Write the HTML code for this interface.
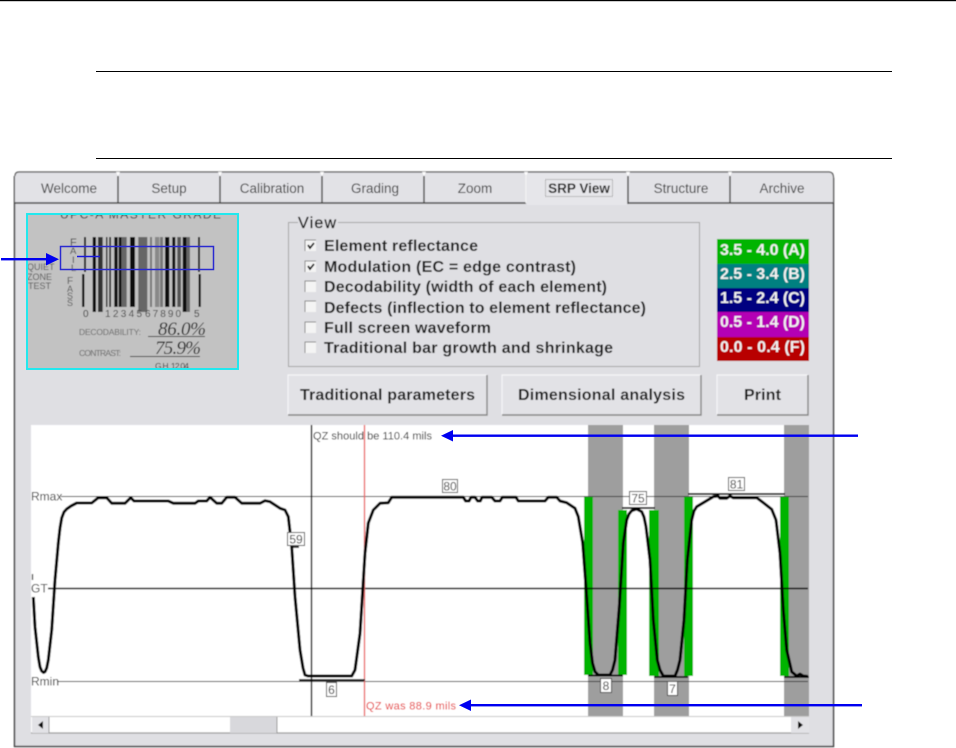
<!DOCTYPE html>
<html>
<head>
<meta charset="utf-8">
<style>
html,body{margin:0;padding:0;background:#fff;width:956px;height:748px;overflow:hidden}
svg{display:block;position:absolute;left:0;top:0}
text{font-family:"Liberation Sans",sans-serif}
.tab{font-size:13.5px;fill:#3a3a3a;text-anchor:middle}
.opt{font-size:16px;font-weight:700;fill:#1c1c1c}
.btn{font-size:16px;font-weight:700;fill:#1c1c1c}
.leg{font-size:16px;font-weight:700;fill:#f2f2f2}
.lb{font-size:12px;fill:#333;text-anchor:middle}
.ax{font-size:12px;fill:#333}
</style>
</head>
<body>
<svg width="956" height="748" viewBox="0 0 956 748" xmlns="http://www.w3.org/2000/svg">
<defs>
<filter id="b1" x="-2%" y="-2%" width="104%" height="104%"><feGaussianBlur stdDeviation="0.4"/></filter>
<filter id="b2" x="-2%" y="-2%" width="104%" height="104%"><feGaussianBlur stdDeviation="0.6"/></filter>
<clipPath id="imgclip"><rect x="27" y="214" width="211" height="155"/></clipPath>
</defs>
<rect x="0" y="0" width="956" height="1.200" fill="#000"/>
<rect x="96" y="71" width="796" height="1" fill="#000"/>
<rect x="96" y="158" width="796" height="1" fill="#000"/>

<g filter="url(#b1)">
<!-- panel -->
<rect x="15" y="203" width="818" height="543" fill="#dfdfe3"/>
<path d="M14.500 176V746.500H833.500V178" fill="none" stroke="#444" stroke-width="1.500"/>
<!-- tabs -->
<path d="M15 203V176Q15 172 19 172H828Q834 172 834 178V203Z" fill="#e2e2e6"/>
<path d="M15 176Q15 172 19 172H829Q833 172 833.500 177V203" fill="none" stroke="#5a5a5a" stroke-width="1.200"/>
<path d="M15 203H526M628 203H833" stroke="#444" stroke-width="1.500" fill="none"/>
<path d="M118 176V203M220 176V203M322 176V203M424 176V203M628 176V204M730 176V203" stroke="#444" stroke-width="1.400"/>
<rect x="527" y="173" width="100" height="32" fill="#e6e6ea"/>
<path d="M526 176V203" stroke="#f4f4f4" stroke-width="1.200"/>
<path d="M116 172h4l-2 4zM218 172h4l-2 4zM320 172h4l-2 4zM422 172h4l-2 4zM524 172h4l-2 4zM626 172h4l-2 4zM728 172h4l-2 4z" fill="#fff"/>
<text class="tab" x="69" y="193">Welcome</text>
<text class="tab" x="169" y="193">Setup</text>
<text class="tab" x="272" y="193">Calibration</text>
<text class="tab" x="375" y="193">Grading</text>
<text class="tab" x="475" y="193">Zoom</text>
<rect x="545.500" y="179.500" width="67" height="17" fill="none" stroke="#777" stroke-width="1" stroke-dasharray="1 1"/>
<text x="579" y="193" text-anchor="middle" font-size="13.500" font-weight="700" fill="#222">SRP View</text>
<text class="tab" x="681" y="193">Structure</text>
<text class="tab" x="782" y="193">Archive</text>

<!-- View group -->
<rect x="288.500" y="222.500" width="411" height="144" fill="none" stroke="#a4a4a4" stroke-width="1"/>
<rect x="298" y="216" width="40" height="12" fill="#dfdfe3"/>
<text x="298" y="228" font-size="16" fill="#111" textLength="38" lengthAdjust="spacing" stroke="#111" stroke-width=".3">View</text>
<g fill="#f4f4f4">
<rect x="305" y="240" width="11" height="11"/>
<rect x="305" y="261" width="11" height="11"/>
<rect x="305" y="281" width="11" height="11"/>
<rect x="305" y="301" width="11" height="11"/>
<rect x="305" y="322" width="11" height="11"/>
<rect x="305" y="342" width="11" height="11"/>
</g>
<path d="M316 240H305V251M316 261H305V272M316 281H305V292M316 301H305V312M316 322H305V333M316 342H305V353" fill="none" stroke="#888" stroke-width="1"/>
<path d="M308 245l2 3 4-5M308 266l2 3 4-5" fill="none" stroke="#000" stroke-width="1.800"/>
<text class="opt" x="324" y="251" textLength="154" lengthAdjust="spacing">Element reflectance</text>
<text class="opt" x="324" y="272" textLength="252" lengthAdjust="spacing">Modulation (EC = edge contrast)</text>
<text class="opt" x="324" y="292" textLength="283" lengthAdjust="spacing">Decodability (width of each element)</text>
<text class="opt" x="324" y="313" textLength="322" lengthAdjust="spacing">Defects (inflection to element reflectance)</text>
<text class="opt" x="324" y="333" textLength="167" lengthAdjust="spacing">Full screen waveform</text>
<text class="opt" x="324" y="353" textLength="289" lengthAdjust="spacing">Traditional bar growth and shrinkage</text>

<!-- legend -->
<rect x="717" y="239" width="92" height="25" fill="#00b400"/>
<rect x="717" y="264" width="92" height="24" fill="#008080"/>
<rect x="717" y="288" width="92" height="24" fill="#000080"/>
<rect x="717" y="312" width="92" height="25" fill="#b400b4"/>
<rect x="717" y="337" width="92" height="24" fill="#b80000"/>
<text class="leg" x="720" y="255" textLength="85" lengthAdjust="spacing">3.5 - 4.0 (A)</text>
<text class="leg" x="720" y="279" textLength="85" lengthAdjust="spacing">2.5 - 3.4 (B)</text>
<text class="leg" x="720" y="303" textLength="85" lengthAdjust="spacing">1.5 - 2.4 (C)</text>
<text class="leg" x="720" y="327" textLength="85" lengthAdjust="spacing">0.5 - 1.4 (D)</text>
<text class="leg" x="720" y="352" textLength="85" lengthAdjust="spacing">0.0 - 0.4 (F)</text>

<!-- buttons -->
<g fill="#e2e2e6">
<rect x="288" y="375" width="199" height="40"/>
<rect x="502" y="375" width="199" height="40"/>
<rect x="717" y="375" width="91" height="40"/>
</g>
<path d="M288 415V375H487M502 415V375H701M717 415V375H808" fill="none" stroke="#f6f6f8" stroke-width="1.200"/>
<path d="M288 415H487V375M502 415H701V375M717 415H808V375" fill="none" stroke="#858585" stroke-width="1.400"/>
<text class="btn" x="300" y="400" textLength="175" lengthAdjust="spacing">Traditional parameters</text>
<text class="btn" x="518" y="400" textLength="167" lengthAdjust="spacing">Dimensional analysis</text>
<text class="btn" x="744" y="400" textLength="37" lengthAdjust="spacing">Print</text>

<!-- plot -->
<rect x="31" y="425" width="778" height="292" fill="#fff"/>
<g fill="#9e9e9e">
<rect x="588" y="425" width="35" height="292"/>
<rect x="654" y="425" width="35" height="292"/>
<rect x="784" y="425" width="25" height="292"/>
</g>
<g fill="#00b400">
<path d="M584 497H593L593 675H584Z"/>
<path d="M618 510H627V675H618Z"/>
<path d="M649 510H659V676H649Z"/>
<path d="M684 497H693V676H684Z"/>
<path d="M780 497H789V676H780Z"/>
</g>
<g stroke="#000" fill="none">
<path d="M61 496.500H808" stroke-width="1.100" stroke="#333"/>
<path d="M48 588.500H808" stroke-width="1.400"/>
<path d="M57 681.500H808" stroke-width="1.100" stroke="#333"/>
<path d="M311.500 425V717" stroke-width="1.400"/>
<path d="M32.500 574V580" stroke-width="1.200"/>
</g>
<path d="M364.500 425V717" stroke="#ec6a6a" stroke-width="1.400"/>
<g stroke="#000" stroke-width="1.700" fill="none">
<path d="M688 494H785"/><path d="M622 508H655"/><path d="M588 675.500H623"/><path d="M654 677H688"/><path d="M299 680H365"/><path d="M291 547H299"/><path d="M391 497.500H463"/><path d="M784 677H809"/>
</g>
<path fill="none" stroke="#000" stroke-width="3" stroke-linejoin="round" d="M33.300 597L35 627L38.300 657L40 667L41.700 671L43.500 672.500L45 671.700L46.700 668L48.300 660L51.700 630L55 580L58.300 543L60 528L61.700 518L64 512L66.700 509L71 506L76.700 503L91.700 503L98.300 497.700L106.700 497.700L111.700 503.300L125 503.300L130.700 497.700L134 501L168.300 501L173.300 503.300L195 503.300L198.300 501L206.700 501L210 497.300L216.700 503.300L221.700 503.300L226.700 497.300L235 497.300L241.700 503.300L260 503.300L265 500.700L270 501.700L280 508.300L285 510L288.300 516.700L291.700 546.700L295 596.700L300 650L303 668L305 675L308 676L351.700 676L355 670L360 633.300L365 553.300L368.300 523L373.300 510L380 503.300L388.300 502.700L391.700 497.300L463.300 497.300L465.700 501L469 501L471 497.300L475 497.300L477.700 501L480.300 501L482 497.300L491.700 497.300L495 501L500 501L502.300 497.300L516 497.300L518.300 501L545 501L548.300 497.300L556.700 497.300L560 501L566.700 502.700L575 508.300L578.300 516.700L582.700 543L586 587L590 643L592.500 663L595 671.700L598.300 675L610 675L612.500 670L615 660L619.300 606.700L623.300 543L626.700 520L629 514L631.700 510.700L636.700 509L641.700 511.700L644 517L646 526.700L650 560L653.300 620L657.300 660L660 670L663.300 676L675 676L677.500 670L680 660L684 620L687.300 560L691.700 520L694 511L696.700 506.700L706.700 500.700L713.300 496.700L718 496L720 498.300L726.700 498.300L730 496L733 497.700L756.700 497.700L763.300 502.700L771.700 509.300L776 520L780 553.300L783.300 610L786.700 650L791.700 671.700L796.700 676L800 674L803.300 676L808 676.500"/>
<!-- value labels -->
<g fill="#fff" stroke="#444" stroke-width="1">
<rect x="287.500" y="532.500" width="17" height="13"/>
<rect x="442.500" y="479.500" width="15" height="13"/>
<rect x="326.500" y="682.500" width="10" height="14"/>
<rect x="629.500" y="491.500" width="17" height="13"/>
<rect x="728.500" y="477.500" width="16" height="13"/>
<rect x="600.500" y="678.500" width="11" height="14"/>
<rect x="667.500" y="681.500" width="10" height="14"/>
</g>
<text class="lb" x="296" y="543.500">59</text>
<text class="lb" x="450" y="490.500">80</text>
<text class="lb" x="331.500" y="694">6</text>
<text class="lb" x="638" y="502.500">75</text>
<text class="lb" x="736.500" y="488.500">81</text>
<text class="lb" x="606" y="690">8</text>
<text class="lb" x="672.500" y="693">7</text>
<text class="ax" x="31" y="500.500">Rmax</text>
<text class="ax" x="31" y="592.500">GT</text>
<text class="ax" x="31" y="685.500">Rmin</text>
<text x="313" y="439.500" font-size="11" fill="#222" textLength="119" lengthAdjust="spacing">QZ should be 110.4 mils</text>
<text x="366" y="709.500" font-size="11" fill="#e41c1c" textLength="90" lengthAdjust="spacing">QZ was  88.9 mils</text>

<!-- scrollbar -->
<rect x="31" y="716" width="778" height="17" fill="#fff"/>
<path d="M31 716.500H809" stroke="#c8c8c8" stroke-width="1"/>
<path d="M31 733H809" stroke="#9a9a9a" stroke-width="1.200"/>
<rect x="32" y="717" width="17" height="16" fill="#e2e2e6"/>
<rect x="791" y="717" width="18" height="16" fill="#e2e2e6"/>
<rect x="230" y="717" width="47" height="16" fill="#d8d8dc"/>
<path d="M277 717V733M49 717V733" stroke="#999" stroke-width="1"/>
<path d="M38 725l5-4v8zM803 725l-5-4v8z" fill="#111"/>
</g>

<!-- barcode image -->
<g clip-path="url(#imgclip)">
<g filter="url(#b2)">
<rect x="24" y="211" width="217" height="161" fill="#c2c2c2"/>
<g fill="#111">
<rect x="84" y="237" width="2" height="35"/><rect x="82" y="274" width="2.400" height="33"/>
<rect x="92.700" y="237" width="3.300" height="75"/>
<rect x="98" y="237" width="4.700" height="75" fill="#333"/>
<rect x="106" y="237" width="1.500" height="70"/>
<rect x="109.300" y="237" width="1.700" height="70"/>
<rect x="114.300" y="237" width="3.400" height="70"/>
<rect x="118.700" y="237" width="3" height="70"/>
<rect x="121.700" y="237" width="5" height="70" fill="#666"/>
<rect x="130" y="237" width="5" height="70"/>
<rect x="138.300" y="237" width="9" height="75" fill="#666"/>
<rect x="150" y="237" width="2" height="70" fill="#777"/>
<rect x="155" y="237" width="4.300" height="70" fill="#888"/>
<rect x="160" y="237" width="3" height="70" fill="#777"/>
<rect x="165" y="237" width="4.300" height="70"/>
<rect x="172.300" y="237" width="3" height="70"/>
<rect x="177.300" y="237" width="3.700" height="70" fill="#555"/>
<rect x="182.700" y="237" width="4" height="75"/>
<rect x="186.700" y="237" width="3.300" height="75" fill="#666"/>
<rect x="198" y="237" width="2" height="35"/><rect x="198.500" y="274" width="2.300" height="33"/>
</g>
<text x="70" y="246" font-size="11" fill="#444">F</text>
<text x="70" y="254" font-size="9.500" fill="#444">A</text>
<text x="72" y="263" font-size="9.500" fill="#444">I</text>
<text x="71" y="271" font-size="9.500" fill="#444">L</text>
<text x="67" y="284" font-size="10" fill="#555">F</text>
<text x="67" y="292" font-size="9" fill="#555">A</text>
<text x="67" y="299" font-size="9" fill="#555">S</text>
<text x="67" y="306" font-size="9" fill="#555">S</text>
<text x="27" y="270" font-size="9" fill="#555">QUIET</text>
<text x="27" y="280" font-size="9" fill="#555">ZONE</text>
<text x="28" y="289" font-size="9" fill="#555">TEST</text>
<text x="60" y="218.500" font-size="12" fill="#333" textLength="161" lengthAdjust="spacing">UPC-A MASTER GRADE</text>
<text x="83" y="317" font-size="10" fill="#333">0</text>
<text x="105" y="317" font-size="10" fill="#444" textLength="37" lengthAdjust="spacing">12345</text>
<text x="145" y="317" font-size="10" fill="#444" textLength="36" lengthAdjust="spacing">67890</text>
<text x="194" y="317" font-size="10" fill="#333">5</text>
<text x="79" y="335" font-size="8.500" fill="#666" textLength="62" lengthAdjust="spacing">DECODABILITY:</text>
<text x="79" y="356" font-size="8.500" fill="#666" textLength="42" lengthAdjust="spacing">CONTRAST:</text>
<text x="158" y="335" font-size="19" font-style="italic" fill="#222" textLength="48" lengthAdjust="spacing" style="font-family:'Liberation Serif',serif">86.0%</text>
<text x="155" y="354" font-size="19" font-style="italic" fill="#222" textLength="46" lengthAdjust="spacing" style="font-family:'Liberation Serif',serif">75.9%</text>
<text x="155" y="369" font-size="8.500" fill="#333" textLength="34" lengthAdjust="spacing">G.H. 12.04</text>
<path d="M148 336.500H205M130 356.500H200" stroke="#333" stroke-width="1"/>
</g>
</g>
<rect x="27" y="214" width="211" height="155" fill="none" stroke="#22e8ee" stroke-width="2"/>
<rect x="60.500" y="246.500" width="153" height="23" fill="none" stroke="#2a2ad0" stroke-width="1.500"/>
<path d="M77 256.500H100" stroke="#1818e0" stroke-width="1.500"/>

<!-- blue arrows -->
<g fill="#0000f0">
<rect x="1" y="258" width="47" height="2.400"/>
<path d="M46 253L59 259.200L46 265.500Z"/>
<rect x="450" y="434.500" width="408" height="2.400"/>
<path d="M441 435.700L453 430V441.500Z"/>
<rect x="468" y="704" width="394" height="2.400"/>
<path d="M459 705.200L471 699.500V711Z"/>
</g>
</svg>
</body>
</html>
